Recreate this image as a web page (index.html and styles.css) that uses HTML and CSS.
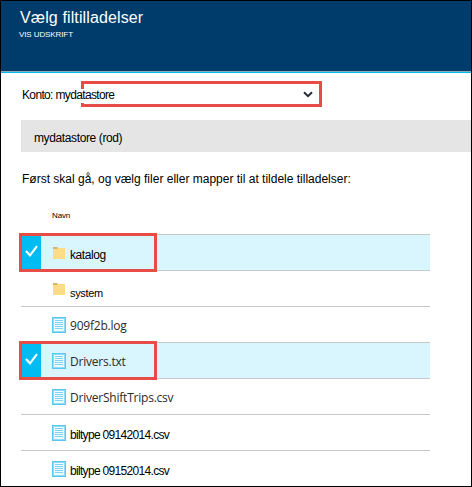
FILE: index.html
```
<!DOCTYPE html>
<html lang="da">
<head>
<meta charset="utf-8">
<title>Vælg filtilladelser</title>
<link rel="stylesheet" href="styles.css">
</head>
<body>
<svg width="0" height="0" class="defs">
  <symbol id="folder" viewBox="0 0 12 12">
    <path d="M0 0h4l1 1h7v2H0z" fill="#d9b36c"/>
    <path d="M0 2h4l1-1h7v11H0z" fill="#fcdc87"/>
  </symbol>
  <symbol id="file" viewBox="0 0 14 16">
    <path d="M0 0h14v16H0z" fill="#59c8f0"/>
    <path d="M1 1h12v14H1z" fill="#8edcf6"/>
    <path d="M2 2h10v12H2z" fill="#effbff"/>
    <path d="M3 3.5h8M3 5.5h8M3 7.5h8M3 9.5h8M3 11.5h8" stroke="#7dd3f2"/>
  </symbol>
  <symbol id="check" viewBox="0 0 13 12">
    <path d="M1 6l4 4.3L12 1.2" fill="none" stroke="#fff" stroke-width="2.1"/>
  </symbol>
</svg>
<div class="blade">
  <header class="head">
    <h1>Vælg filtilladelser</h1>
    <p>VIS UDSKRIFT</p>
  </header>
  <div class="account">
    <div class="mark mark-select"></div>
    <span class="account-name">Konto: mydatastore</span>
    <svg class="chevron" width="10" height="7" viewBox="0 0 10 7"><path d="M1 1.2l4 4 4-4" fill="none" stroke="#252b38" stroke-width="2"/></svg>
  </div>
  <div class="crumb">mydatastore (rod)</div>
  <p class="hint">Først skal gå, og vælg filer eller mapper til at tildele tilladelser:</p>
  <div class="list">
    <div class="colhead">Navn</div>
    <div class="row selected marked"><div class="tick"><svg width="13" height="12"><use href="#check"/></svg></div><svg class="folder" width="12" height="12"><use href="#folder"/></svg><span class="name">katalog</span><div class="mark mark-row"></div></div>
    <div class="row"><div class="tick"></div><svg class="folder" width="12" height="12"><use href="#folder"/></svg><span class="name small">system</span></div>
    <div class="row"><div class="tick"></div><svg class="file" width="14" height="16"><use href="#file"/></svg><span class="name ui">909f2b.log</span></div>
    <div class="row selected marked"><div class="tick"><svg width="13" height="12"><use href="#check"/></svg></div><svg class="file" width="14" height="16"><use href="#file"/></svg><span class="name ui">Drivers.txt</span><div class="mark mark-row"></div></div>
    <div class="row"><div class="tick"></div><svg class="file" width="14" height="16"><use href="#file"/></svg><span class="name ui">DriverShiftTrips.csv</span></div>
    <div class="row"><div class="tick"></div><svg class="file" width="14" height="16"><use href="#file"/></svg><span class="name tight">biltype 09142014.csv</span></div>
    <div class="row"><div class="tick"></div><svg class="file" width="14" height="16"><use href="#file"/></svg><span class="name tight">biltype 09152014.csv</span></div>
  </div>
</div>
</body>
</html>
```
FILE: styles.css
```
* { box-sizing: border-box; }
body { margin: 0; background: #fff; color: #000; font-family: "Liberation Sans", Arial, sans-serif; font-size: 12px; }
h1, p { margin: 0; font-weight: normal; }
.defs { position: absolute; }
.blade { width: 472px; height: 487px; border: 1px solid #000; overflow: hidden; white-space: nowrap; }
.head { height: 72px; background: #003c6b; color: #fff; border-bottom: 1px solid #00b8f1; box-shadow: inset 0 -1px #8faab5; padding: 7px 0 0 19px; }
.head h1 { font-size: 16px; line-height: 20px; letter-spacing: 0.12px; }
.head p { font-size: 8px; line-height: 12px; margin: 1px 0 0 -1px; letter-spacing: -0.1px; }
.account { position: relative; height: 47px; padding: 14px 0 0 21px; line-height: 16px; }
.account-name { position: relative; letter-spacing: -0.65px; }
.mark { position: absolute; border: 3px solid #e84c46; }
.mark-select { left: 80px; top: 8px; width: 241px; height: 26px; border-left: 0; }
.mark-select::before, .mark-select::after { content: ""; position: absolute; left: 0; width: 3px; background: #e84c46; }
.mark-select::before { top: 0; height: 5px; }
.mark-select::after { bottom: 0; height: 1px; }
.chevron { position: absolute; left: 302px; top: 18px; }
.crumb { height: 32px; margin-left: 20px; padding-left: 13px; background: #e5e5e5; line-height: 36px; letter-spacing: -0.38px; }
.hint { height: 54px; padding: 18px 0 0 21px; line-height: 18px; }
.list { width: 409px; margin-left: 20px; }
.colhead { height: 28px; padding: 4px 0 0 31px; font-size: 8px; line-height: 12px; letter-spacing: -0.15px; }
.row { position: relative; display: flex; align-items: center; height: 36px; border-top: 1px solid #c8c8c8; }
.row.selected { background: #d9f5fe; }
.row.marked { z-index: 1; }
.tick { display: flex; align-items: center; justify-content: center; width: 20px; height: 35px; flex: none; }
.selected .tick { background: #00bcf2; padding-bottom: 3px; }
.folder { margin-left: 12px; flex: none; }
.file { margin-left: 11px; flex: none; }
.name { line-height: 16px; padding-top: 5px; letter-spacing: -0.4px; }
.folder + .name { margin-left: 5px; }
.file + .name { margin-left: 4px; }
.name.small { font-size: 11px; padding-top: 8px; letter-spacing: -0.35px; }
.name.tight { letter-spacing: -0.68px; }
.name.ui { font-family: "Open Sans", "Noto Sans", sans-serif; font-weight: 500; color: #2b2b2b; padding-top: 3px; letter-spacing: -0.22px; }
.mark-row { left: -2px; top: -2px; width: 138px; height: 39px; }
```
